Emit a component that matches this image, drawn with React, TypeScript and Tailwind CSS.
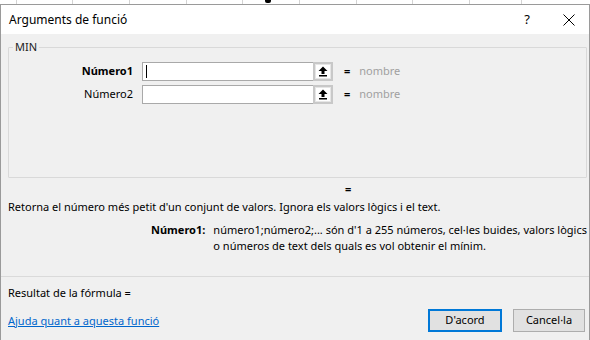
import React from "react";

const font = { fontFamily: '"Noto Sans", "Open Sans", sans-serif' };

function RefButton() {
  return (
    <div className="w-[20px] h-[19px] bg-[#c8c8c8] flex items-center justify-center -mr-px -my-px">
      <div className="w-[16px] h-[15px] bg-white border border-[#e6e6e6] flex items-center justify-center">
        <svg width="10" height="11" viewBox="0 0 10 11">
          <path d="M5 0.5 L9.5 5 L6.5 5 L6.5 8 L3.5 8 L3.5 5 L0.5 5 Z" fill="#000" />
          <rect x="1" y="9" width="8" height="1.5" fill="#000" />
        </svg>
      </div>
    </div>
  );
}

function ArgRow({ label, bold, cursor }: { label: string; bold?: boolean; cursor?: boolean }) {
  return (
    <div className="flex items-center h-[19px]">
      <div className={`w-[124px] text-right text-[11px] text-black ${bold ? "font-bold" : ""}`}>{label}</div>
      <div className="ml-[9px] w-[191px] h-[19px] border border-[#a9a9a9] bg-white flex items-center">
        <div className="flex-1 h-full flex items-center pl-[3px]">
          {cursor && <div className="w-px h-[13px] bg-black" />}
        </div>
        <RefButton />
      </div>
      <div className="ml-[11px] text-[11px] font-bold text-black">=</div>
      <div className="ml-[9px] text-[11px] text-[#a0a0a0]">nombre</div>
    </div>
  );
}

export default function App() {
  const cols = [17, 56, 57, 57, 56, 57, 57, 56, 57, 52];
  return (
    <div className="w-[590px] h-[340px] bg-white overflow-hidden relative" style={font}>
      <div className="flex h-[4px]">
        {cols.map((w, i) => (
          <div key={i} className="h-full border-r border-[#d4d4d4]" style={{ width: w }} />
        ))}
      </div>
      <div className="absolute left-[265px] top-0 w-[6px] h-[3px] bg-black rounded-b-[2px]" />
      <div className="h-[336px] w-[590px] border-l border-r border-t border-[#9a9a9a] flex flex-col">
        <div className="h-[29px] shrink-0 bg-white flex items-center pl-[8px] pr-[12px] text-[12px] text-black">
          <span>Arguments de funció</span>
          <span className="ml-auto mr-[33px] text-[13px]">?</span>
          <svg width="12" height="12" viewBox="0 0 12 12" className="mr-[2px]">
            <path d="M0.5 0.5 L11.5 11.5 M11.5 0.5 L0.5 11.5" stroke="#000" strokeWidth="1" />
          </svg>
        </div>
        <div className="flex-1 bg-[#f0f0f0] flex flex-col pl-[7px] pr-[2px]">
          <div className="relative shrink-0 mt-[13px] h-[131px] border border-[#d9d9d9] rounded-[1px] pt-[14px]">
            <div className="absolute -top-[9px] left-[4px] px-[2px] bg-[#f0f0f0] text-[11px] text-[#222] leading-[16px]">MIN</div>
            <div className="flex flex-col gap-[4px]">
              <ArgRow label="Número1" bold cursor />
              <ArgRow label="Número2" />
            </div>
          </div>
          <div className="text-[11px] font-bold text-black pl-[337px] leading-[14px] mt-[4px]">=</div>
          <div className="text-[11px] text-black leading-[16px] mt-[3px] whitespace-nowrap">
            Retorna el número més petit d'un conjunt de valors. Ignora els valors lògics i el text.
          </div>
          <div className="flex mt-[7px] text-[11px] leading-[16px]">
            <div className="w-[203px] text-right font-bold text-black">Número1:</div>
            <div className="ml-[8px] text-black whitespace-nowrap">
              número1;número2;... són d'1 a 255 números, cel·les buides, valors lògics
              <br />o números de text dels quals es vol obtenir el mínim.
            </div>
          </div>
          <div className="mt-[22px] border-t border-[#dadada] -ml-[7px] -mr-[2px]" />
          <div className="mt-[8px] text-[11px] text-black leading-[16px]">Resultat de la fórmula =</div>
          <div className="flex items-center mt-[8px]">
            <a className="text-[11px] text-[#0066cc] underline leading-[16px]">Ajuda quant a aquesta funció</a>
            <button className="ml-auto w-[74px] h-[23px] border-2 border-[#0078d7] bg-[#e1e1e1] text-[11px] text-black">D'acord</button>
            <button className="ml-[11px] mr-[2px] w-[72px] h-[23px] border border-[#adadad] bg-[#e1e1e1] text-[11px] text-black">Cancel·la</button>
          </div>
        </div>
      </div>
    </div>
  );
}
